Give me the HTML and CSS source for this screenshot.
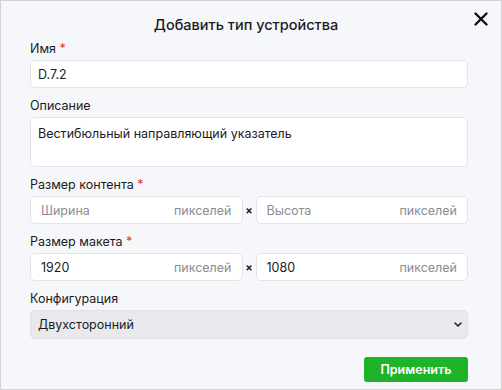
FILE: index.html
```html
<!DOCTYPE html>
<html lang="ru">
<head>
    <meta charset="UTF-8">
    <title>Добавить тип устройства</title>
    <link rel="stylesheet" href="styles.css">
</head>
<body>
    <div class="dialog">
        <header class="dialog-header">
            <h2>Добавить тип устройства</h2>
            <button class="close-btn" aria-label="Закрыть">
                <svg width="14" height="14" viewBox="0 0 14 14"><path d="M1.5 1.5 L12.5 12.5 M12.5 1.5 L1.5 12.5" stroke="#111" stroke-width="2.4" stroke-linecap="round"/></svg>
            </button>
        </header>

        <form class="dialog-body">
            <div class="field">
                <label>Имя <span class="req">*</span></label>
                <input type="text" class="text-input" value="D.7.2">
            </div>

            <div class="field">
                <label>Описание</label>
                <textarea class="text-area">Вестибюльный направляющий указатель</textarea>
            </div>

            <div class="field">
                <label>Размер контента <span class="req">*</span></label>
                <div class="size-row">
                    <div class="size-input">
                        <input type="text" placeholder="Ширина">
                        <span class="unit">пикселей</span>
                    </div>
                    <span class="times">×</span>
                    <div class="size-input">
                        <input type="text" placeholder="Высота">
                        <span class="unit">пикселей</span>
                    </div>
                </div>
            </div>

            <div class="field">
                <label>Размер макета <span class="req">*</span></label>
                <div class="size-row">
                    <div class="size-input">
                        <input type="text" value="1920">
                        <span class="unit">пикселей</span>
                    </div>
                    <span class="times">×</span>
                    <div class="size-input">
                        <input type="text" value="1080">
                        <span class="unit">пикселей</span>
                    </div>
                </div>
            </div>

            <div class="field">
                <label>Конфигурация</label>
                <div class="select-wrap">
                    <select class="select">
                        <option>Двухсторонний</option>
                        <option>Односторонний</option>
                    </select>
                    <svg class="chevron" width="8" height="5" viewBox="0 0 8 5"><path d="M1 1 L4 4 L7 1" fill="none" stroke="#222" stroke-width="1.6" stroke-linecap="round" stroke-linejoin="round"/></svg>
                </div>
            </div>

            <div class="actions">
                <button type="button" class="apply-btn">Применить</button>
            </div>
        </form>
    </div>
</body>
</html>
```

FILE: styles.css
```css
* {
    margin: 0;
    padding: 0;
    box-sizing: border-box;
}

body {
    font-family: Inter, "Noto Sans", sans-serif;
    font-size: 12.5px;
    color: #1b1b1f;
    background: #f6f7fb;
}

.dialog {
    width: 502px;
    height: 390px;
    border: 1px solid #d3d3d6;
    background: #f6f7fb;
}

.dialog-header {
    position: relative;
    height: 38px;
    padding-top: 14px;
    text-align: center;
}

.dialog-header h2 {
    font-size: 14.5px;
    font-weight: 500;
    line-height: 20px;
    margin-left: -10px;
}

.close-btn {
    position: absolute;
    top: 11px;
    right: 13px;
    border: none;
    background: none;
    cursor: pointer;
    display: flex;
}

.dialog-body {
    padding: 0 33px 0 29px;
    display: flex;
    flex-direction: column;
    gap: 8px;
}

.field label {
    display: block;
    line-height: 20px;
    margin-bottom: 1px;
}

.req {
    color: #e53935;
}

.text-input,
.text-area,
.size-input,
.select {
    display: block;
    width: 100%;
    font-family: inherit;
    font-size: 12.5px;
    color: #1b1b1f;
    background: #fff;
    border: 1px solid #e2e4e9;
    border-radius: 5px;
    outline: none;
}

.text-input {
    height: 28px;
    padding: 0 7px;
}

.text-area {
    height: 50px;
    padding: 8px 7px 6px;
    resize: none;
    line-height: 16px;
}

.size-row {
    display: flex;
    align-items: center;
}

.size-input {
    flex: 1;
    min-width: 0;
    height: 28px;
    display: flex;
    align-items: center;
    padding: 0 10px;
}

.size-input input {
    flex: 1;
    width: 0;
    min-width: 0;
    border: none;
    outline: none;
    background: none;
    font-family: inherit;
    font-size: 12.5px;
    color: #1b1b1f;
}

.size-input input::placeholder {
    color: #8c8c92;
}

.unit {
    color: #8c8c92;
}

.times {
    width: 13px;
    text-align: center;
    font-size: 11px;
    font-weight: 700;
    color: #222;
}

.select-wrap {
    position: relative;
}

.select {
    appearance: none;
    height: 29px;
    padding: 0 7px;
    background: #e9e9ed;
    border-color: #e0e0e5;
}

.chevron {
    position: absolute;
    right: 6px;
    top: 12px;
}

.actions {
    display: flex;
    justify-content: flex-end;
    margin-top: 10px;
}

.apply-btn {
    width: 104px;
    height: 25px;
    background: #1eb328;
    color: #fff;
    border: none;
    border-radius: 3px;
    font-family: inherit;
    font-size: 12.5px;
    font-weight: 600;
    cursor: pointer;
}
```
